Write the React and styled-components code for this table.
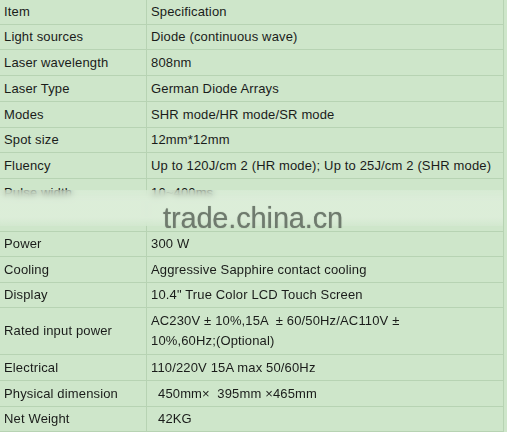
import React from "react";
import styled, { createGlobalStyle } from "styled-components";

const GlobalStyle = createGlobalStyle`
  html, body {
    margin: 0;
    padding: 0;
    background: #cee6ca;
  }
  body {
    font-family: "Liberation Sans", Arial, sans-serif;
  }
`;

const Page = styled.div`
  width: 507px;
  height: 432px;
  overflow: hidden;
  background: #cee6ca;
`;

const Table = styled.div`
  width: 504px;
  border-right: 1px solid #b7d3b3;
  box-sizing: border-box;
`;

const Row = styled.div`
  position: relative;
  display: grid;
  grid-template-columns: 146px 1fr;
  height: ${(p) => p.$h}px;
  box-sizing: border-box;
  border-bottom: 1px solid #b7d3b3;
`;

const Cell = styled.div`
  display: flex;
  align-items: ${(p) => (p.$top ? "flex-start" : "center")};
  padding: ${(p) => (p.$top ? "4px" : "0")} 0 0 ${(p) => (p.$indent ? 11 : 4)}px;
  font-size: 13px;
  line-height: 20px;
  color: #1a1c1a;
  letter-spacing: 0.15px;
  white-space: pre;
  box-sizing: border-box;
  & + & {
    border-left: 1px solid #b7d3b3;
  }
`;

const Band = styled.div`
  position: absolute;
  left: 0;
  right: 0;
  top: 11px;
  height: 36px;
  background: linear-gradient(
    to bottom,
    rgba(226, 240, 223, 0.45),
    rgba(222, 238, 219, 0.85) 30%,
    rgba(222, 238, 219, 0.85) 75%,
    rgba(214, 234, 211, 0.6)
  );
  backdrop-filter: blur(3px);
`;

const Watermark = styled.div`
  position: absolute;
  left: 163px;
  top: 11px;
  font-family: "Liberation Sans", Arial, sans-serif;
  font-size: 29px;
  line-height: 34px;
  color: #6f7b6e;
  letter-spacing: -0.15px;
  text-shadow: 0 0 1px rgba(100, 112, 99, 0.6);
`;

const rows = [
  { item: "Item", spec: "Specification", h: 25 },
  { item: "Light sources", spec: "Diode (continuous wave)", h: 25 },
  { item: "Laser wavelength", spec: "808nm", h: 26 },
  { item: "Laser Type", spec: "German Diode Arrays", h: 26 },
  { item: "Modes", spec: "SHR mode/HR mode/SR mode", h: 26 },
  { item: "Spot size", spec: "12mm*12mm", h: 25 },
  { item: "Fluency", spec: "Up to 120J/cm 2 (HR mode); Up to 25J/cm 2 (SHR mode)", h: 26 },
  { item: "Pulse width", spec: "10~400ms", h: 53, mark: true },
  { item: "Power", spec: "300 W", h: 25 },
  { item: "Cooling", spec: "Aggressive Sapphire contact cooling", h: 26 },
  { item: "Display", spec: "10.4\" True Color LCD Touch Screen", h: 25 },
  {
    item: "Rated input power",
    spec: (
      <span>
        AC230V ± 10%,15A  ± 60/50Hz/AC110V ±
        <br />
        10%,60Hz;(Optional)
      </span>
    ),
    h: 47,
  },
  { item: "Electrical", spec: "110/220V 15A max 50/60Hz", h: 26 },
  { item: "Physical dimension", spec: "450mm×  395mm ×465mm", h: 26, indent: true },
  { item: "Net Weight", spec: "42KG", h: 25, indent: true },
];

export default function App() {
  return (
    <Page>
      <GlobalStyle />
      <Table>
        {rows.map((r) => (
          <Row key={r.item} $h={r.h}>
            <Cell $top={r.mark}>{r.item}</Cell>
            <Cell $top={r.mark} $indent={r.indent}>
              {r.spec}
            </Cell>
            {r.mark && (
              <Band>
                <Watermark>trade.china.cn</Watermark>
              </Band>
            )}
          </Row>
        ))}
      </Table>
    </Page>
  );
}
